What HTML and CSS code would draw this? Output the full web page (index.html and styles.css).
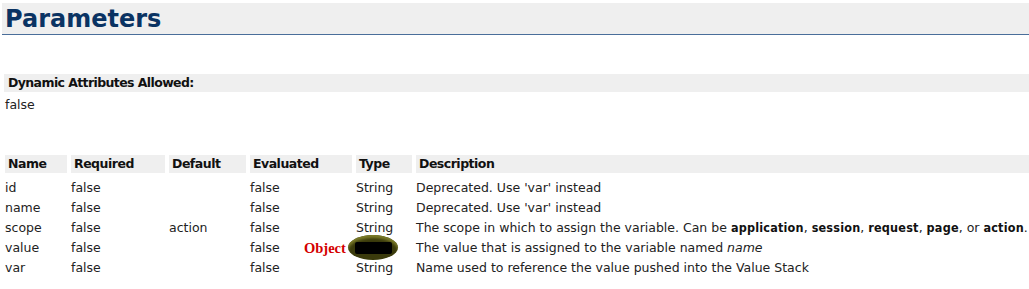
FILE: index.html
```html
<!DOCTYPE html>
<html>
<head>
<meta charset="utf-8">
<link rel="stylesheet" href="styles.css">
</head>
<body>
<div class="page">
  <h1 class="title">Parameters</h1>
  <div class="attr-head">Dynamic Attributes Allowed:</div>
  <div class="attr-val">false</div>
  <table class="params">
    <thead>
      <tr>
        <th class="c-name">Name</th>
        <th class="c-req">Required</th>
        <th class="c-def">Default</th>
        <th class="c-eval">Evaluated</th>
        <th class="c-type">Type</th>
        <th class="c-desc">Description</th>
      </tr>
    </thead>
    <tbody>
      <tr><td>id</td><td>false</td><td></td><td>false</td><td>String</td><td>Deprecated. Use 'var' instead</td></tr>
      <tr><td>name</td><td>false</td><td></td><td>false</td><td>String</td><td>Deprecated. Use 'var' instead</td></tr>
      <tr><td>scope</td><td>false</td><td>action</td><td>false</td><td>String</td><td>The scope in which to assign the variable. Can be <b>application</b>, <b>session</b>, <b>request</b>, <b>page</b>, or <b>action</b>.</td></tr>
      <tr><td>value</td><td>false</td><td></td><td>false</td><td class="redact-cell"><span class="obj-label">Object</span><span class="blob"><span class="blob-core"></span></span></td><td>The value that is assigned to the variable named <i>name</i></td></tr>
      <tr><td>var</td><td>false</td><td></td><td>false</td><td>String</td><td>Name used to reference the value pushed into the Value Stack</td></tr>
    </tbody>
  </table>
</div>
</body>
</html>
```
FILE: styles.css
```css
html, body {
  margin: 0;
  padding: 0;
  background: #ffffff;
  overflow: hidden;
}
body {
  font-family: "DejaVu Sans", Verdana, sans-serif;
  font-size: 12.5px;
  color: #222222;
}
.page {
  padding: 3px 0 0 2px;
  width: 1100px;
}
.title {
  margin: 0;
  background: #efefef;
  color: #0a3363;
  font-size: 24px;
  font-weight: bold;
  height: 31px;
  line-height: 33px;
  padding-left: 3px;
  border-bottom: 1px solid #4a6e9a;
}
.attr-head {
  margin-top: 39px;
  margin-left: 2px;
  background: #efefef;
  font-weight: bold;
  height: 18px;
  line-height: 18px;
  padding-left: 4px;
  color: #111;
  letter-spacing: -0.6px;
}
.attr-val {
  margin-left: 3px;
  padding-top: 3px;
  height: 20px;
  line-height: 20px;
  color: #222;
}
.params {
  margin-top: 40px;
  margin-left: -1px;
  border-collapse: separate;
  border-spacing: 4px 0;
  table-layout: fixed;
}
.params th {
  background: #efefef;
  text-align: left;
  font-weight: bold;
  color: #111;
  height: 18px;
  line-height: 18px;
  padding: 0 3px;
  white-space: nowrap;
  letter-spacing: -0.5px;
}
.params tbody tr:first-child td {
  padding-top: 5px;
}
.params td {
  height: 20px;
  line-height: 20px;
  padding: 0 6px 0 0;
  white-space: nowrap;
  vertical-align: top;
}
.params td b {
  font-family: "DejaVu Sans Condensed", "DejaVu Sans", sans-serif;
  font-stretch: condensed;
  font-weight: bold;
  color: #111;
  letter-spacing: 0.2px;
}
.c-name { width: 56px; }
.c-req { width: 88px; }
.c-def { width: 71px; }
.c-eval { width: 96px; }
.c-type { width: 50px; }
.c-desc { width: 640px; }
.redact-cell {
  position: relative;
}
.obj-label {
  position: absolute;
  left: -52px;
  top: 1px;
  font-family: "Liberation Serif", "DejaVu Serif", serif;
  font-weight: bold;
  font-size: 14.5px;
  color: #d40000;
  line-height: 18px;
}
.blob {
  position: absolute;
  left: -8px;
  top: -3px;
  width: 50px;
  height: 25px;
  border-radius: 50%;
  background: #3a3a0c;
  box-shadow: inset 0 3px 3px #7d7d2a;
  display: flex;
  align-items: center;
  justify-content: center;
}
.blob-core {
  width: 37px;
  height: 12px;
  background: #000;
  border-radius: 2px;
}
```
